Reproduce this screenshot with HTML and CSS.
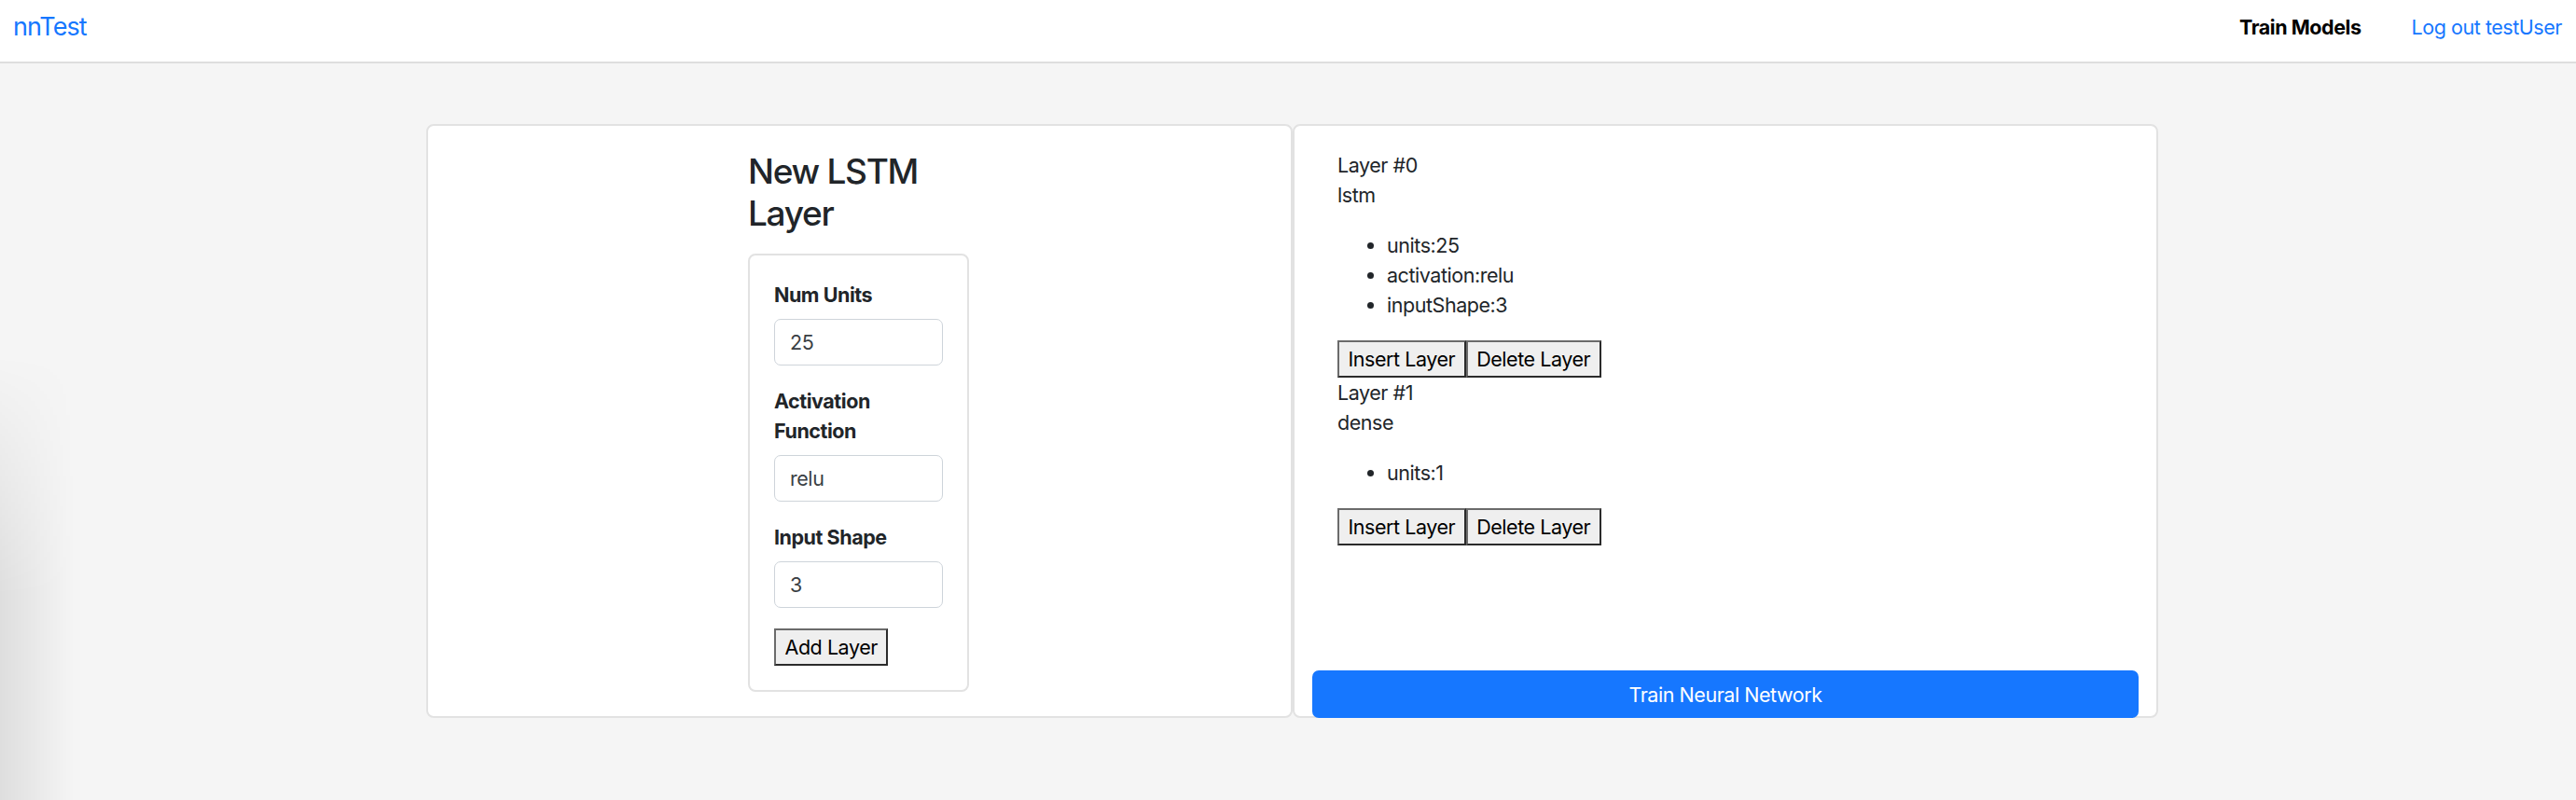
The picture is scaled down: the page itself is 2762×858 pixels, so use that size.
FILE: index.html
```html
<!DOCTYPE html>
<html lang="en">
<head>
<meta charset="utf-8">
<title>nnTest</title>
<link rel="stylesheet" href="styles.css">
</head>
<body>
<nav class="navbar">
  <a class="brand" href="#">nnTest</a>
  <div class="nav-links">
    <a class="nav-link active" href="#">Train Models</a>
    <a class="nav-link" href="#">Log out testUser</a>
  </div>
</nav>
<main class="main">
  <div class="panels">
    <section class="panel panel-form">
      <div class="form-col">
        <h3 class="form-title">New LSTM Layer</h3>
        <form class="form-card">
          <div class="group">
            <label class="label">Num Units</label>
            <input class="input" type="text" value="25">
          </div>
          <div class="group">
            <label class="label">Activation Function</label>
            <input class="input" type="text" value="relu">
          </div>
          <div class="group">
            <label class="label">Input Shape</label>
            <input class="input" type="text" value="3">
          </div>
          <button type="button" class="btn">Add Layer</button>
        </form>
      </div>
    </section>
    <section class="panel panel-layers">
      <div class="layers">
        <div class="layer">
          <div>Layer #0</div>
          <div>lstm</div>
          <ul class="params">
            <li>units:25</li>
            <li>activation:relu</li>
            <li>inputShape:3</li>
          </ul>
          <div class="btn-row"><button type="button" class="btn">Insert Layer</button><button type="button" class="btn">Delete Layer</button></div>
        </div>
        <div class="layer">
          <div>Layer #1</div>
          <div>dense</div>
          <ul class="params">
            <li>units:1</li>
          </ul>
          <div class="btn-row"><button type="button" class="btn">Insert Layer</button><button type="button" class="btn">Delete Layer</button></div>
        </div>
      </div>
      <button type="button" class="train-btn">Train Neural Network</button>
    </section>
  </div>
</main>
</body>
</html>
```

FILE: styles.css
```css
* { box-sizing: border-box; }
html, body { margin: 0; }
body {
  background: #f5f5f5;
  font-family: Inter, "Noto Sans", sans-serif;
  font-size: 21.5px;
  line-height: 32px;
  letter-spacing: -0.45px;
  color: #212529;
  min-height: 858px;
}
body::before {
  content: "";
  position: fixed;
  left: 0;
  top: 380px;
  bottom: 0;
  width: 80px;
  background: linear-gradient(to right, rgba(0,0,0,0.09), rgba(0,0,0,0));
  -webkit-mask-image: linear-gradient(to bottom, transparent, #000 260px);
  mask-image: linear-gradient(to bottom, transparent, #000 260px);
  pointer-events: none;
}
.navbar {
  display: flex;
  justify-content: space-between;
  align-items: flex-start;
  height: 68px;
  padding: 9px 15px 0 14px;
  background: #fff;
  border-bottom: 2px solid #dedede;
}
.brand {
  font-size: 27px;
  line-height: 40px;
  letter-spacing: -0.9px;
  color: #1677ff;
  text-decoration: none;
}
.nav-links {
  display: flex;
  gap: 54px;
  margin-top: 4px;
}
.nav-link {
  line-height: 32px;
  color: #1677ff;
  text-decoration: none;
}
.nav-link.active {
  color: #000;
  font-weight: 700;
}
.main {
  padding: 65px 0 0 457px;
}
.panels {
  display: grid;
  grid-template-columns: 929px 928px;
}
.panel {
  background: #fff;
  border: 2px solid #e2e2e2;
  border-radius: 8px;
}
.panel-form {
  padding: 26px 0 26px 343px;
}
.form-col {
  width: 237px;
}
.form-title {
  font-size: 37px;
  line-height: 45px;
  font-weight: 500;
  letter-spacing: -1.3px;
  margin: 0 0 21px;
}
.form-card {
  border: 2px solid #e2e2e2;
  border-radius: 8px;
  padding: 26px 26px 26px;
  margin: 0;
}
.group {
  margin-bottom: 22px;
}
.label {
  display: block;
  font-weight: 700;
  margin-bottom: 10px;
}
.input {
  display: block;
  width: 100%;
  height: 50px;
  padding: 0 16px;
  border: 1.5px solid #ced4da;
  border-radius: 7px;
  font: inherit;
  letter-spacing: inherit;
  color: #3a3f44;
  background: #fff;
}
.btn {
  font: inherit;
  letter-spacing: inherit;
  line-height: 32px;
  height: 40px;
  padding: 0 9.5px;
  margin: 0;
  background: #efefef;
  color: #000;
  border: 2px solid;
  border-color: #6b6b6b #2b2b2b #2b2b2b #6b6b6b;
  border-radius: 0;
}
.panel-layers {
  display: flex;
  flex-direction: column;
  padding: 26px 19px 0;
}
.layers {
  flex: 1;
  padding-left: 27px;
}
.params {
  margin: 22px 0;
  padding-left: 53px;
}
.btn-row {
  display: flex;
}
.train-btn {
  display: block;
  width: 100%;
  height: 51px;
  margin-bottom: -2px;
  border: none;
  border-radius: 7px;
  background: #1677ff;
  color: #fff;
  font: inherit;
  letter-spacing: inherit;
  text-align: center;
}
```
